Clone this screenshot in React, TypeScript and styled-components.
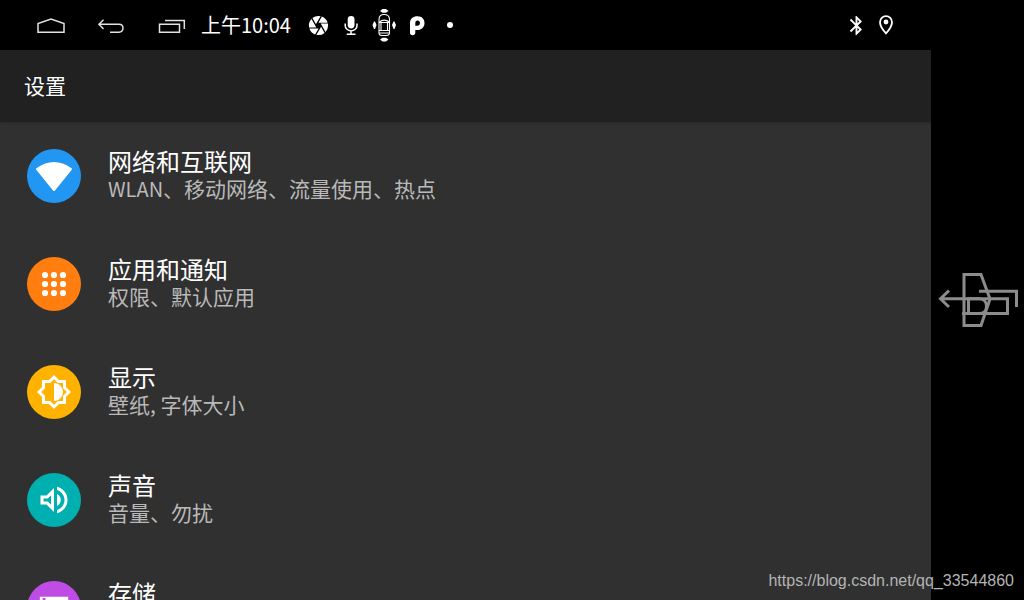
import React from 'react';
import styled, { createGlobalStyle } from 'styled-components';
import {
  MdBluetooth,
  MdCamera,
  MdOutlineBrightnessMedium,
  MdOutlineVolumeUp,
  MdStorage,
} from 'react-icons/md';

const GlobalStyle = createGlobalStyle`
  * { box-sizing: border-box; }
  body {
    margin: 0;
    background: #000;
    color: #fff;
    font-family: "Noto Sans CJK SC", "Noto Sans", sans-serif;
  }
`;

const Screen = styled.div`
  position: relative;
  display: grid;
  grid-template-columns: minmax(0, 1fr) 93px;
  height: 100vh;
  overflow: hidden;
`;

const Device = styled.div`
  display: flex;
  flex-direction: column;
  min-height: 0;
`;

const StatusBar = styled.header`
  display: flex;
  align-items: center;
  flex: none;
  height: 50px;
  padding: 0 34px 0 21px;
`;

const NavButtons = styled.nav`
  display: flex;
`;

const NavButton = styled.button`
  display: flex;
  width: 60px;
  height: 50px;
  padding: 0;
  border: 0;
  background: none;
  color: #e2e2e2;
  cursor: pointer;
`;

const Clock = styled.time`
  width: 101px;
  font-size: 20px;
  line-height: 50px;
  white-space: nowrap;
`;

const Notifications = styled.div`
  display: flex;
  flex: 1;
`;

const Notification = styled.span`
  display: flex;
  align-items: center;
  justify-content: center;
  width: 33px;
  height: 50px;
`;

const SystemIcons = styled.div`
  display: flex;
  align-items: center;
  gap: 7px;
`;

const TitleBar = styled.div`
  position: relative;
  display: flex;
  align-items: center;
  flex: none;
  height: 72px;
  padding: 0 24px 2px;
  background: #212121;
  box-shadow: 0 1px 3px rgba(0, 0, 0, 0.2);
`;

const PageTitle = styled.h1`
  margin: 0;
  font-size: 21px;
  font-weight: 400;
  line-height: 28px;
`;

const SettingsList = styled.ul`
  flex: 1;
  min-height: 0;
  margin: 0;
  padding: 0;
  overflow: hidden;
  background: #303030;
  list-style: none;
`;

const SettingRow = styled.button`
  display: flex;
  align-items: center;
  gap: 27px;
  width: 100%;
  height: 108px;
  padding: 0 27px;
  border: 0;
  background: none;
  color: inherit;
  font: inherit;
  text-align: left;
  cursor: pointer;
`;

const IconDisc = styled.span<{ $color: string }>`
  display: flex;
  align-items: center;
  justify-content: center;
  flex: none;
  width: 54px;
  height: 54px;
  border-radius: 50%;
  background: ${({ $color }) => $color};
`;

const SettingText = styled.span`
  display: flex;
  flex-direction: column;
  padding-bottom: 4px;
`;

const SettingName = styled.span`
  font-size: 24px;
  line-height: 28px;
`;

const SettingSummary = styled.span`
  min-height: 26px;
  color: #b9b9b9;
  font-size: 21px;
  line-height: 26px;
`;

const Latin = styled.span`
  font-size: 20px;
`;

const SidePanel = styled.aside`
  display: flex;
  align-items: center;
`;

const Watermark = styled.span`
  position: absolute;
  right: 10px;
  bottom: 9px;
  color: #b4b4b4;
  font-family: "Liberation Sans", Arial, sans-serif;
  font-size: 16px;
  line-height: 20px;
`;

const NavIcon = ({ d }: { d: string }) => (
  <svg width="60" height="50" viewBox="-30 -25 60 50" fill="none" stroke="currentColor" strokeWidth="1.5" aria-hidden="true">
    <path d={d} />
  </svg>
);

const MicIcon = () => (
  <svg width="33" height="50" viewBox="-16 -25 33 50" fill="none" stroke="#fff" strokeWidth="1.5" aria-hidden="true">
    <rect x="-3.3" y="-9" width="6.8" height="12.4" rx="3.4" fill="#fff" stroke="none" />
    <path d="M-5.8 -1.5V.5A5.9 5.4 0 0 0 6 .5V-1.5M0 6V9M-4.3 9.3H4.5" />
  </svg>
);

const CarIcon = () => (
  <svg width="33" height="50" viewBox="-16 -25 33 50" fill="none" stroke="#fff" strokeWidth="1.1" aria-hidden="true">
    <path d="M-5 -5.5C-5 -9 -3 -10.500 0 -10.500S5.500 -9 5.500 -5.500V8C5.500 10 4 10.500 2 10.500H-2C-4 10.500 -5 10 -5 8Z" />
    <path d="M-4.500 -3C-2 -5.500 2.500 -5.500 5 -3M-5 -2.500H5.500M-3 -2V5.500H3.500V-2M-5 5.500H5.500M-4.500 8H5" />
    <path
      d="M-4 -14L-1.500 -16H2L4.500 -14L2 -12.300H-1.500ZM-4 14.500L-1.500 12.800H2L4.500 14.500L2 16.500H-1.500ZM-11.500 0L-10 -3.500H-9L-7.500 0L-9 4H-10ZM12 0L10.500 -3.500H9.500L8 0L9.500 4H10.500Z"
      fill="#fff"
      stroke="none"
    />
  </svg>
);

const ParkingIcon = () => (
  <svg width="33" height="50" viewBox="-16 -25 33 50" aria-hidden="true">
    <path
      d="M-7 7.500V-2C-7 -6 -4 -8.700 .5 -8.700C5 -8.700 7.500 -5.800 7.500 -2C7.500 2.300 4.500 5 0 5H-1.700V7.500A2.650 2.650 0 0 1 -7 7.500ZM-1.700 .8H.2C2 .8 3 -.4 3 -1.900C3 -3.400 2 -4.500 .6 -4.500C-.9 -4.500 -1.700 -3.500 -1.700 -1.800Z"
      fill="#fff"
      fillRule="evenodd"
    />
  </svg>
);

const DotIcon = () => (
  <svg width="33" height="50" viewBox="-16 -25 33 50" aria-hidden="true">
    <circle r="3" fill="#fff" />
  </svg>
);

const LocationIcon = () => (
  <svg width="22" height="22" viewBox="-11 -11 22 22" aria-hidden="true">
    <path
      d="M0 8.300C-3.500 4.500 -6 .8 -6 -2.800A6 6 0 0 1 6 -2.800C6 .8 3.500 4.500 0 8.300Z"
      fill="none"
      stroke="#fff"
      strokeWidth="1.800"
    />
    <circle cy="-3" r="2.400" fill="#fff" />
  </svg>
);

const WifiIcon = () => (
  <svg width="54" height="54" viewBox="0 0 54 54" aria-hidden="true">
    <path d="M10 20Q27 8 44 20L27 41Z" fill="#fff" stroke="#fff" strokeWidth="2" strokeLinejoin="round" />
  </svg>
);

const AppsIcon = () => (
  <svg width="54" height="54" viewBox="0 0 54 54" fill="#fff" aria-hidden="true">
    {[18, 27, 36].map((y) => [18, 27, 36].map((x) => <circle key={`${x}-${y}`} cx={x} cy={y} r="3.1" />))}
  </svg>
);

const SideIcon = () => (
  <svg width="93" height="60" viewBox="0 0 93 60" fill="none" stroke="#8c8c8c" strokeWidth="3" aria-hidden="true">
    <path d="M33 4.500H50L59 29L50 55.500H33Z" />
    <path d="M18 20.500L9.500 28.800L18 37M9.500 28.800H48C58 28.800 58 43.500 48 43.500H31" />
    <path d="M37.500 28.800H76.500V43.500H37.500ZM48 21.200H85.500V37" />
  </svg>
);

const settings = [
  {
    name: '网络和互联网',
    summary: (
      <>
        <Latin>WLAN</Latin>、移动网络、流量使用、热点
      </>
    ),
    color: '#2196f3',
    icon: <WifiIcon />,
  },
  { name: '应用和通知', summary: '权限、默认应用', color: '#ff7e0f', icon: <AppsIcon /> },
  { name: '显示', summary: '壁纸, 字体大小', color: '#ffb300', icon: <MdOutlineBrightnessMedium size={36} /> },
  { name: '声音', summary: '音量、勿扰', color: '#00b0b0', icon: <MdOutlineVolumeUp size={36} /> },
  { name: '存储', summary: null, color: '#c04ce6', icon: <MdStorage size={34} /> },
];

export default function App() {
  return (
    <>
      <GlobalStyle />
      <Screen>
        <Device>
          <StatusBar>
            <NavButtons>
              <NavButton aria-label="主屏幕">
                <NavIcon d="M-13 7.200V-1.500L0 -6L13 -1.500V7.200Z" />
              </NavButton>
              <NavButton aria-label="返回">
                <NavIcon d="M-7.500 -5.300L-12 -.7L-7.500 3.900M-12 -.7H8C13.300 -.7 13.300 7.200 8 7.200H-1" />
              </NavButton>
              <NavButton aria-label="最近任务">
                <NavIcon d="M-11.500 -.7H8.500V7.200H-11.500ZM-6 -4.500H13.300V4" />
              </NavButton>
            </NavButtons>
            <Clock>上午10:04</Clock>
            <Notifications>
              <Notification>
                <MdCamera size={23} />
              </Notification>
              <Notification>
                <MicIcon />
              </Notification>
              <Notification>
                <CarIcon />
              </Notification>
              <Notification>
                <ParkingIcon />
              </Notification>
              <Notification>
                <DotIcon />
              </Notification>
            </Notifications>
            <SystemIcons>
              <MdBluetooth size={23} />
              <LocationIcon />
            </SystemIcons>
          </StatusBar>
          <TitleBar>
            <PageTitle>设置</PageTitle>
          </TitleBar>
          <SettingsList>
            {settings.map(({ name, summary, color, icon }) => (
              <li key={name}>
                <SettingRow>
                  <IconDisc $color={color}>{icon}</IconDisc>
                  <SettingText>
                    <SettingName>{name}</SettingName>
                    <SettingSummary>{summary}</SettingSummary>
                  </SettingText>
                </SettingRow>
              </li>
            ))}
          </SettingsList>
        </Device>
        <SidePanel>
          <SideIcon />
        </SidePanel>
        <Watermark>https://blog.csdn.net/qq_33544860</Watermark>
      </Screen>
    </>
  );
}
